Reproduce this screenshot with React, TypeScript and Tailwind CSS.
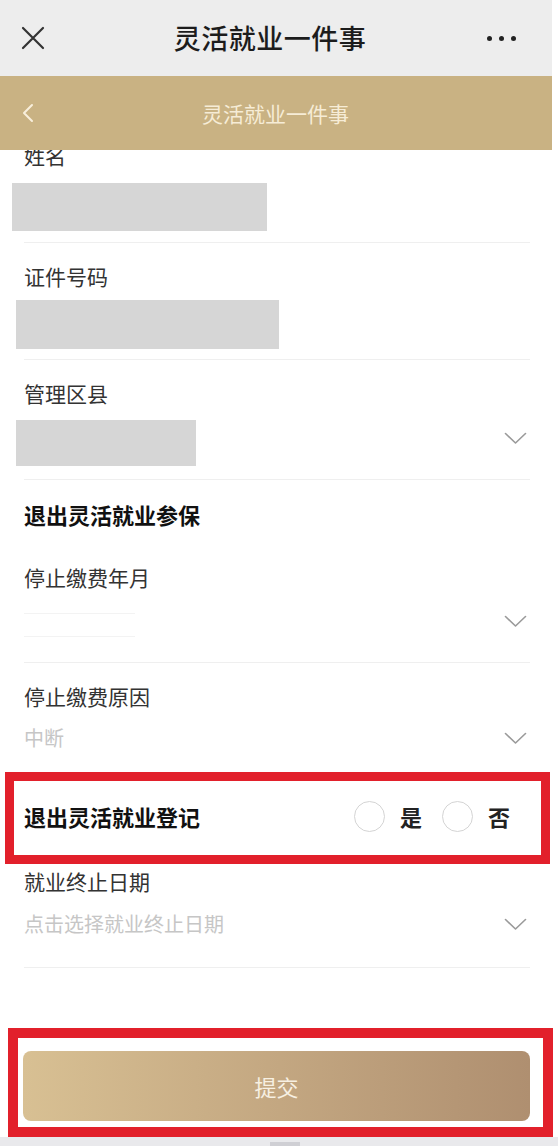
import React from 'react';

const font = { fontFamily: '"Noto Sans CJK SC", "Noto Sans", sans-serif' };

function ChevronDown() {
  return (
    <svg width="23" height="13" viewBox="0 0 23 13" className="shrink-0">
      <path d="M1.5 1.5 L11.5 11 L21.5 1.5" fill="none" stroke="#9a9a9a" strokeWidth="1.6" strokeLinecap="round" strokeLinejoin="round" />
    </svg>
  );
}

function Divider({ mt }: { mt: string }) {
  return <div className={`${mt} h-px ml-[24px] mr-[28px] bg-[#efefef]`} />;
}

function Label({ text, mt, bold = false }: { text: string; mt: string; bold?: boolean }) {
  return (
    <div className={`${mt} h-[24px] leading-[24px] pl-[24px] ${bold ? 'text-[22px] font-bold text-[#111]' : 'text-[21px] text-[#333]'}`}>
      {text}
    </div>
  );
}

function Radio({ label }: { label: string }) {
  return (
    <div className="flex items-center">
      <span className="w-[31px] h-[31px] rounded-full border-[1.5px] border-[#d4d4d4] bg-white" />
      <span className="ml-[15px] text-[22px] font-bold text-[#222] leading-none">{label}</span>
    </div>
  );
}

export default function App() {
  return (
    <div className="w-[558px] h-[1146px] bg-white overflow-hidden flex flex-col" style={font}>
      {/* wechat top bar */}
      <div className="w-[552px] h-[76px] shrink-0 bg-[#ededed] flex items-center justify-between pl-[21px] pr-[36px] relative z-10">
        <svg width="24" height="24" viewBox="0 0 24 24">
          <path d="M2 2 L22 22 M22 2 L2 22" stroke="#333" strokeWidth="2.2" strokeLinecap="round" />
        </svg>
        <div className="text-[27px] font-medium text-[#1c1c1c] tracking-[0.5px] ml-[8px]">灵活就业一件事</div>
        <div className="flex gap-[7px]">
          <span className="w-[5px] h-[5px] rounded-full bg-[#222]" />
          <span className="w-[5px] h-[5px] rounded-full bg-[#222]" />
          <span className="w-[5px] h-[5px] rounded-full bg-[#222]" />
        </div>
      </div>

      {/* gold header */}
      <div className="w-[552px] h-[74px] shrink-0 bg-[#c9b283] flex items-center relative z-10">
        <svg width="14" height="20" viewBox="0 0 14 20" className="ml-[21px]">
          <path d="M11 2 L3 10 L11 18" fill="none" stroke="#f8efdc" strokeWidth="2" strokeLinecap="round" strokeLinejoin="round" />
        </svg>
        <div className="flex-1 text-center text-[21px] text-[#f6ecd6] mr-[36px] mt-[2px]">灵活就业一件事</div>
      </div>

      {/* form */}
      <div className="flex flex-col -mt-[7px] relative z-0">
        <Label text="姓名" mt="mt-0" />
        <div className="mt-[16px] ml-[12px] w-[255px] h-[48px] bg-[#d6d6d6]" />
        <Divider mt="mt-[11px]" />

        <Label text="证件号码" mt="mt-[21px]" />
        <div className="mt-[12px] ml-[16px] w-[263px] h-[49px] bg-[#d6d6d6]" />
        <Divider mt="mt-[10px]" />

        <Label text="管理区县" mt="mt-[21px]" />
        <div className="mt-[15px] h-[46px] flex items-start justify-between pr-[31px]">
          <div className="ml-[16px] w-[180px] h-[46px] bg-[#d6d6d6]" />
          <div className="mt-[12px]"><ChevronDown /></div>
        </div>
        <Divider mt="mt-[13px]" />

        <Label text="退出灵活就业参保" mt="mt-[22px]" bold />

        <Label text="停止缴费年月" mt="mt-[39px]" />
        <div className="mt-[18px] h-[28px] flex items-center justify-between pr-[31px]">
          <div className="ml-[24px] w-[111px] h-[24px] border-t border-b border-[#f3f3f3] mt-[8px]" />
          <ChevronDown />
        </div>
        <Divider mt="mt-[27px]" />

        <Label text="停止缴费原因" mt="mt-[21px]" />
        <div className="mt-[16px] h-[28px] flex items-center justify-between pr-[31px]">
          <span className="pl-[24px] text-[20px] text-[#c6c6c6]">中断</span>
          <ChevronDown />
        </div>

        {/* highlighted radio row */}
        <div className="mt-[20px] ml-[5px] w-[545px] h-[92px] border-[9px] border-[#e2202b] flex items-center justify-between pl-[10px] pr-[31px]">
          <span className="text-[22px] font-bold text-[#111] -mt-[4px]">退出灵活就业登记</span>
          <div className="flex items-center gap-[20px] -mt-[4px]">
            <Radio label="是" />
            <Radio label="否" />
          </div>
        </div>

        <Label text="就业终止日期" mt="mt-[5px]" />
        <div className="mt-[17px] h-[28px] flex items-center justify-between pr-[31px]">
          <span className="pl-[24px] text-[20px] text-[#c6c6c6]">点击选择就业终止日期</span>
          <ChevronDown />
        </div>
        <Divider mt="mt-[29px]" />

        {/* submit */}
        <div className="mt-[60px] ml-[8px] w-[545px] h-[109px] border-[10px] border-[#e2202b] pl-[5px] pr-[13px] pt-[13px]">
          <button className="w-full h-[70px] rounded-[8px] bg-gradient-to-r from-[#d8c093] to-[#af8f70] text-[22px] text-[#f7f0e2]">
            提交
          </button>
        </div>

        <div className="h-[9px] bg-[#e9e9ec] flex items-end">
          <div className="ml-[270px] w-[30px] h-[4px] bg-[#cfcfd4]" />
        </div>
      </div>
    </div>
  );
}
